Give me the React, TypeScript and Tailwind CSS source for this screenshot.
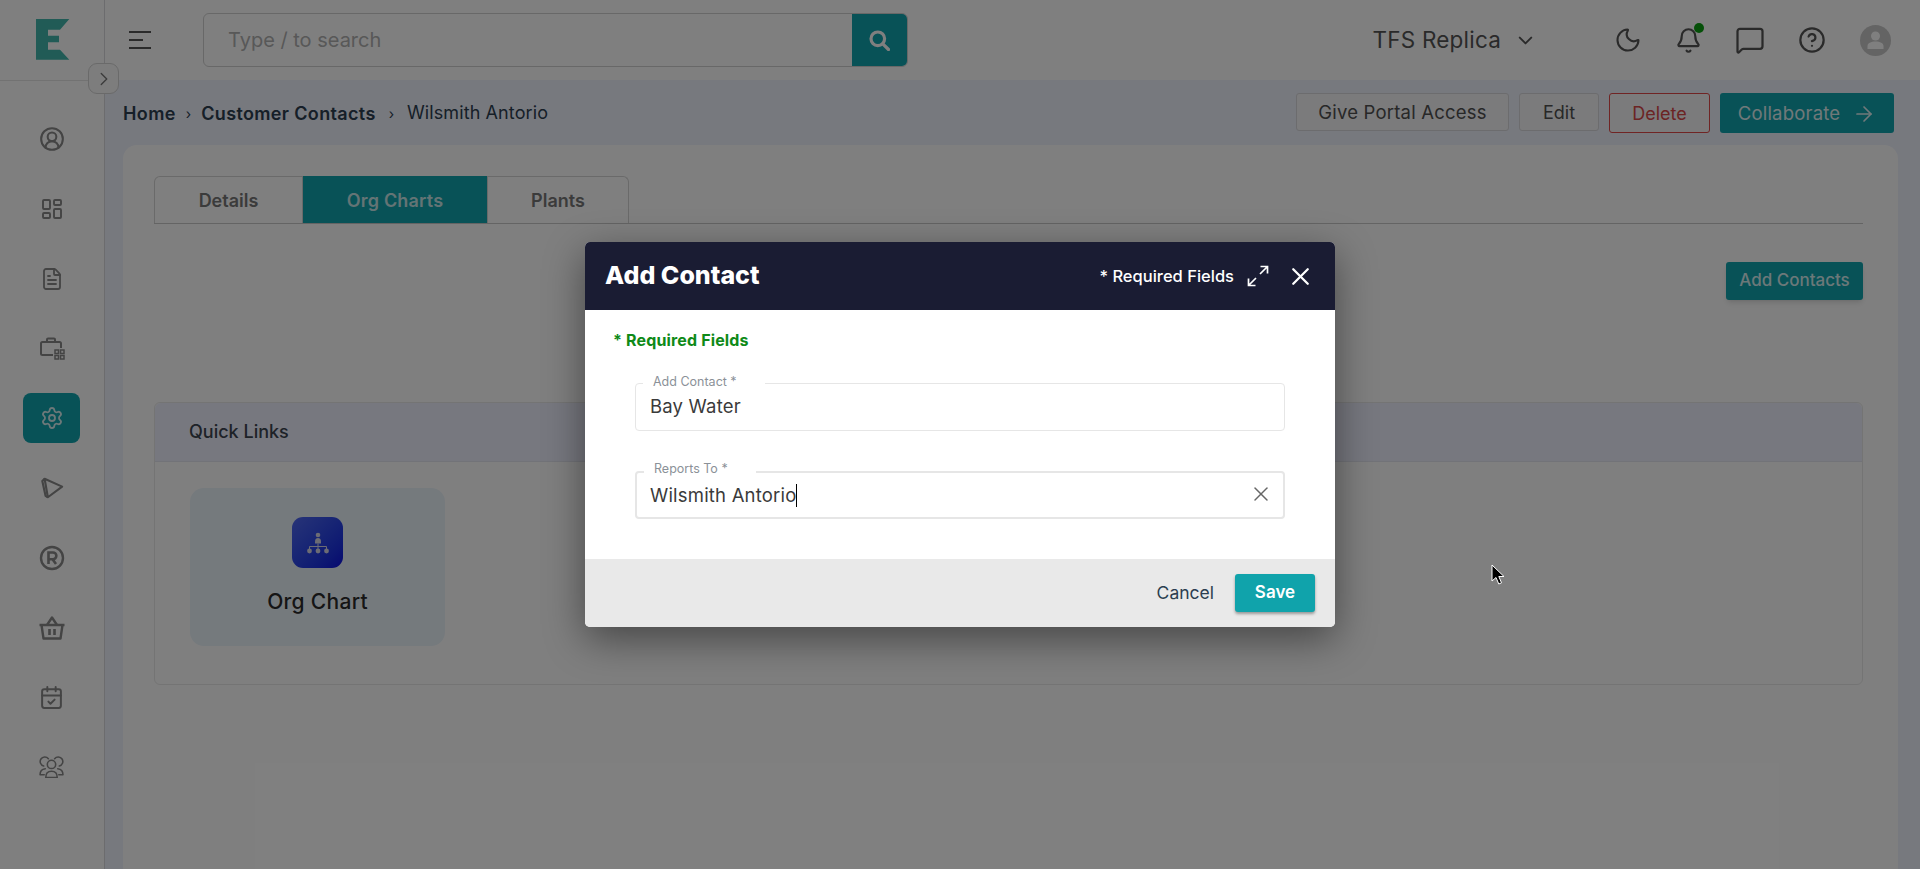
import React from "react";
import {
  ChevronRight, ChevronDown, CircleUserRound, LayoutDashboard, FileText, Settings, CalendarCheck, Moon, Bell, MessageSquare, CircleHelp, ArrowRight, X,
} from "lucide-react";

const Nav = ({ children, active }: { children: React.ReactNode; active?: boolean }) => (
  <div className={`flex h-[50px] w-[57px] items-center justify-center rounded-lg ${active ? "bg-[#10a4ae] text-[#d8f0f2]" : "text-[#888]"}`}>
    {children}
  </div>
);

const Field = ({ label, value, notch, focused }: { label: string; value: string; notch: string; focused?: boolean }) => (
  <div className={`relative flex h-[48px] w-[650px] items-center rounded-[4px] border-[#e6e6e6] bg-white pr-[10px] ${focused ? "border-2 pl-[13px]" : "border pl-[14px]"}`}>
    <span className={`absolute left-[7px] bg-white pl-[10px] text-[12.500px] leading-[14px] text-[#8b9198] ${focused ? "top-[-11px]" : "top-[-9px]"} ${notch}`}>{label}</span>
    <span className={`flex-1 text-[18.500px] tracking-[0.2px] text-[#3a3a3a] ${focused ? "mb-[2px]" : ""}`}>
      {value}
      {focused && <span className="ml-[-1px] inline-block h-[23px] w-px translate-y-[5px] bg-black" />}
    </span>
    {focused && <X size={24} strokeWidth={1.5} className="mb-[3px] text-[#666]" />}
  </div>
);

export default function App() {
  return (
    <div className="relative flex h-screen w-full overflow-hidden bg-[#eff2fd] font-['Inter',sans-serif] text-[#2c3e50]">
      {/* sidebar */}
      <aside className="flex w-[105px] shrink-0 flex-col border-r border-[#d8d8dc] bg-white">
        <div className="flex h-[81px] items-start justify-center border-b border-[#e4e4e4] pl-[1px] pt-[19px]">
          <svg width="34" height="41" viewBox="0 0 34 41">
            <path d="M0 0H33.300L24 10.700H12V16.700H23V23.300H12V30.700H24L33.300 40.700H0Z" fill="#42b6ac" />
          </svg>
        </div>
        <nav className="flex flex-col items-center gap-[19.800px] pr-[1px] pt-[33px]">
          <Nav><CircleUserRound size={26} strokeWidth={1.9} /></Nav>
          <Nav><LayoutDashboard size={24} strokeWidth={1.9} /></Nav>
          <Nav><FileText size={24} strokeWidth={1.8} /></Nav>
          <Nav>
            <svg width="26" height="24" viewBox="0 0 26 24" fill="none" stroke="currentColor" strokeWidth="2">
              <path d="M14 19H3.500A1.500 1.500 0 0 1 2 17.500V7.500A1.500 1.500 0 0 1 3.500 6H20.500A1.500 1.500 0 0 1 22 7.500V12" />
              <path d="M8 6V3.500A1 1 0 0 1 9 2.500H15A1 1 0 0 1 16 3.500V6" />
              <rect x="16" y="14" width="3.500" height="3.500" strokeWidth="1.500" />
              <rect x="21.500" y="14" width="3.500" height="3.500" strokeWidth="1.500" />
              <rect x="16" y="19.500" width="3.500" height="3.500" strokeWidth="1.500" />
              <rect x="21.500" y="19.500" width="3.500" height="3.500" strokeWidth="1.500" />
            </svg>
          </Nav>
          <Nav active><Settings size={24} strokeWidth={1.8} /></Nav>
          <Nav>
            <svg width="24" height="24" viewBox="0 0 26 26" fill="none" stroke="currentColor" strokeWidth="2.300" strokeLinejoin="round">
              <path d="M5 3L24 11.500L8.500 23Z" />
              <path d="M5 3L2.500 5.500L6 21.500L8.500 23" />
            </svg>
          </Nav>
          <Nav>
            <svg width="26" height="26" viewBox="0 0 26 26" fill="none" stroke="currentColor" strokeWidth="2.400">
              <circle cx="13" cy="13" r="11" />
              <path d="M9.500 19V7.500H14A3.300 3.300 0 0 1 14 14.200H9.500M13.500 14.200L17 19" strokeWidth="2.600" />
            </svg>
          </Nav>
          <Nav>
            <svg width="28" height="26" viewBox="0 0 28 26" fill="none" stroke="currentColor" strokeWidth="2.400" strokeLinejoin="round">
              <path d="M1.500 10H26.500M3.500 10L5.500 23.500H22.500L24.500 10" />
              <path d="M9 10L14 2.500L19 10" />
              <path d="M11.500 14V20M16.500 14V20" strokeWidth="2.600" />
            </svg>
          </Nav>
          <Nav><CalendarCheck size={25} strokeWidth={1.9} /></Nav>
          <Nav>
            <svg width="25" height="22" viewBox="0 0 24 21" fill="none" stroke="currentColor" strokeWidth="1.500" strokeLinecap="round" strokeLinejoin="round">
              <path d="M4.500 9.500A4.400 4.400 0 1 1 9 2.500" />
              <path d="M19.500 9.500A4.400 4.400 0 1 0 15 2.500" />
              <circle cx="12" cy="8" r="4" />
              <path d="M6.500 20.500C6.500 16 9 14.500 12 14.500S17.500 16 17.500 20.500Z" />
              <path d="M5 18H1C1 14.500 3 12.500 6 12.200" />
              <path d="M19 18H23C23 14.500 21 12.500 18 12.200" />
            </svg>
          </Nav>
        </nav>
      </aside>

      {/* main */}
      <div className="flex min-w-0 flex-1 flex-col">
        <header className="flex h-[80px] shrink-0 items-center bg-white pl-[24px] pr-[29px]">
          <div className="flex w-[22px] flex-col items-start gap-[5.500px]">
            <span className="h-[2.500px] w-[22px] bg-[#555]" />
            <span className="h-[2.500px] w-[14px] bg-[#555]" />
            <span className="h-[2.500px] w-[22px] bg-[#555]" />
          </div>
          <div className="ml-[52px] flex h-[54px] w-[705px] overflow-hidden rounded-[6px] border border-[#d0d0d0]">
            <div className="flex flex-1 items-center pl-[24px] text-[20px] text-[#b0b0b0]">Type / to search</div>
            <div className="flex w-[55px] items-center justify-center bg-[#10a4ae] text-white">
              <svg width="21" height="21" viewBox="0 0 21 21" fill="none" stroke="#fff" strokeWidth="3.200">
                <circle cx="8.800" cy="8.800" r="6.800" />
                <path d="M13.800 13.800L19.500 19.500" strokeLinecap="round" />
              </svg>
            </div>
          </div>
          <div className="ml-auto flex items-center">
            <span className="text-[22.500px] tracking-[0.2px] text-[#555]">TFS Replica</span>
            <ChevronDown size={23} strokeWidth={2} className="ml-[13px] text-[#555]" />
          </div>
          <div className="ml-[76px] flex items-center text-[#555]">
            <div className="flex w-[30px] justify-center"><Moon size={28} strokeWidth={1.8} /></div>
            <div className="relative ml-[30px] flex w-[30px] justify-center">
              <Bell size={27} strokeWidth={1.9} />
              <span className="absolute right-[-1px] top-[-4px] h-[10px] w-[10px] rounded-full bg-[#0aa010]" />
            </div>
            <div className="ml-[32px] flex w-[30px] justify-center"><MessageSquare size={30} strokeWidth={1.8} /></div>
            <div className="ml-[32px] flex w-[30px] justify-center"><CircleHelp size={28} strokeWidth={1.9} /></div>
            <div className="ml-[33px] flex h-[31px] w-[31px] items-center justify-center rounded-full bg-[#c8c8c8]">
              <svg width="17" height="18" viewBox="0 0 17 18" fill="#fff">
                <circle cx="8.500" cy="5" r="4.500" />
                <path d="M0.500 18V15C0.500 12 4 10.500 8.500 10.500S16.500 12 16.500 15V18Z" />
              </svg>
            </div>
          </div>
        </header>

        <div className="flex h-[65px] shrink-0 items-center pl-[18px] pr-[26px] pt-[1px]">
          <span className="text-[18px] font-semibold tracking-[0.4px] text-[#2c3e50]">Home</span>
          <span className="mx-[10px] text-[14px] text-[#2c3e50]">›</span>
          <span className="text-[18px] font-semibold tracking-[0.35px] text-[#2c3e50]">Customer Contacts</span>
          <span className="mx-[13px] text-[14px] text-[#2c3e50]">›</span>
          <span className="mb-[2px] text-[18px] tracking-[0.1px] text-[#2c3e50]">Wilsmith Antorio</span>
          <div className="ml-auto flex items-start gap-[10px]">
            <button className="h-[38px] w-[213px] rounded-[3px] border border-[#d8d8dc] bg-[#f6f6f8] pt-[1px] text-[18.500px] tracking-[0.2px] text-[#505050]">Give Portal Access</button>
            <button className="h-[38px] w-[80px] rounded-[3px] border border-[#d8d8dc] bg-[#f6f6f8] text-[18px] text-[#505050]">Edit</button>
            <button className="h-[40px] w-[101px] rounded-[3px] border border-[#e04848] bg-[#f6f6f8] text-[18px] text-[#d84848]">Delete</button>
            <button className="flex h-[40px] w-[174px] items-center justify-center gap-[12px] rounded-[3px] bg-[#10a4ae] pt-[1px] text-[18.500px] tracking-[0.2px] text-[#e0f2f4]">
              Collaborate <ArrowRight size={24} strokeWidth={1.7} />
            </button>
          </div>
        </div>

        <main className="ml-[18px] mr-[22px] flex-1 rounded-t-[14px] bg-white pl-[31px] pr-[35px] pt-[31px]">
          <div className="flex border-b border-[#c8c8c8]">
            <div className="flex h-[47px] w-[149px] items-center justify-center rounded-tl-[6px] border border-b-0 border-[#d4d4d4] text-[18px] font-semibold text-[#777]">Details</div>
            <div className="flex h-[47px] w-[184px] items-center justify-center bg-[#10a4ae] pt-[1px] text-[18px] font-semibold tracking-[0.2px] text-[#c8e8ea]">Org Charts</div>
            <div className="flex h-[47px] w-[142px] items-center justify-center rounded-tr-[6px] border border-b-0 border-[#d4d4d4] text-[18px] font-semibold text-[#777]">Plants</div>
          </div>
          <div className="mt-[38px] flex justify-end">
            <button className="h-[38px] w-[137px] rounded-[3px] bg-[#10a4ae] text-[17px] font-medium text-[#d8f0f2] shadow-md">Add Contacts</button>
          </div>
          <section className="mt-[102px] h-[283px] rounded-[6px] border border-[#e8e8e8]">
            <div className="flex h-[59px] items-center rounded-t-[6px] border-b border-[#e4e6f0] bg-[#eef1fe] pb-[1px] pl-[34px] text-[18px] font-medium text-[#3c4450]">Quick Links</div>
            <div className="ml-[35px] mt-[26px] flex h-[158px] w-[255px] flex-col items-center rounded-[14px] bg-[#ebf4fb] pt-[29px]">
              <div className="flex h-[51px] w-[51px] items-center justify-center rounded-[11px] bg-gradient-to-br from-[#5068f0] to-[#1006e0]">
                <svg width="24" height="24" viewBox="0 0 24 24" fill="#d8d8e8">
                  <circle cx="12" cy="4" r="2.300" />
                  <path d="M9 11C9 8 10 7 12 7S15 8 15 11V12.500H9Z" />
                  <path d="M12 12.500V15M3.500 19V15.500H20.500V19M12 15.500V19" stroke="#d8d8e8" strokeWidth="1" fill="none" />
                  <circle cx="3.500" cy="20" r="2.400" />
                  <circle cx="12" cy="20" r="2.400" />
                  <circle cx="20.500" cy="20" r="2.400" />
                </svg>
              </div>
              <span className="mt-[18px] text-[21px] font-medium tracking-[0.3px] text-[#2a2a2a]">Org Chart</span>
            </div>
          </section>
        </main>
      </div>

      {/* collapse toggle */}
      <button className="absolute left-[88px] top-[63px] flex h-[31px] w-[31px] items-center justify-center rounded-[9px] border border-[#d4d4d4] bg-[#fbfbfb] text-[#777]">
        <ChevronRight size={22} strokeWidth={1.5} />
      </button>

      {/* modal */}
      <div className="absolute inset-0 flex items-start justify-center bg-black/50 pt-[242px]">
        <div className="w-[750px] overflow-hidden rounded-[5px] bg-white shadow-[0_12px_40px_rgba(0,0,0,0.45)]">
          <div className="flex h-[68px] items-center bg-[#1a1c33] pl-[20px] pr-[20px] text-white">
            <span className="text-[25px] font-extrabold">Add Contact</span>
            <span className="ml-auto text-[16.500px] font-medium">* Required Fields</span>
            <svg width="22" height="22" viewBox="0 0 22 22" fill="none" stroke="#fff" strokeWidth="1.700" className="ml-[13px]">
              <path d="M13.500 1.500H20.500V8.500M20.500 1.500L13 9M8.500 20.500H1.500V13.500M1.500 20.500L9 13" />
            </svg>
            <X size={29} strokeWidth={1.9} className="ml-[17px]" />
          </div>
          <div className="h-[249px] pl-[28px] pt-[20px]">
            <div className="text-[16px] font-bold leading-[20px] tracking-[0.15px] text-[#0f8a18]">* Required Fields</div>
            <div className="ml-[22px] mt-[33px] flex flex-col gap-[40px]">
              <Field label="Add Contact *" value="Bay Water" notch="pr-[28px]" />
              <Field label="Reports To *" value="Wilsmith Antorio" notch="pr-[28px]" focused />
            </div>
          </div>
          <div className="flex h-[68px] items-center justify-end bg-[#e9e9e9] pr-[20px]">
            <span className="text-[17.500px] text-[#2c3e50]">Cancel</span>
            <button className="ml-[21px] h-[38px] w-[80px] rounded-[3px] bg-[#10a3ab] text-[17px] font-semibold text-white shadow-[0_2px_3px_rgba(0,0,0,0.35)]">Save</button>
          </div>
        </div>
      </div>

      {/* mouse pointer */}
      <svg width="14" height="22" viewBox="0 0 14 22" className="absolute left-[1491px] top-[564px]">
        <path d="M1 1V17L5 13.500L7.800 20L10.500 18.800L7.800 12.500H13Z" fill="#000" stroke="#fff" strokeWidth="1" />
      </svg>
    </div>
  );
}
